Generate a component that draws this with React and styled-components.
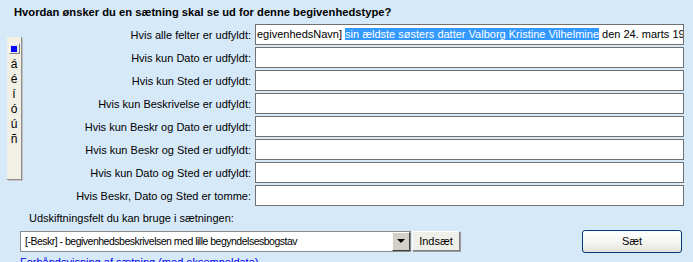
import React from "react";
import styled, { createGlobalStyle } from "styled-components";

const Global = createGlobalStyle`
  html, body {
    margin: 0;
    padding: 0;
    background: #d6e9f9;
  }
  body {
    font-family: "Liberation Sans", Arial, sans-serif;
    font-size: 11px;
    color: #000;
  }
`;

const Page = styled.div`
  width: 693px;
  height: 262px;
  overflow: hidden;
  background: #d6e9f9;
`;

const Title = styled.div`
  font-weight: bold;
  font-size: 11.2px;
  padding: 6px 0 0 14px;
  height: 18px;
  box-sizing: border-box;
`;

const Body = styled.div`
  display: flex;
  padding-left: 7px;
`;

const Toolbar = styled.div`
  margin-top: 19px;
  width: 15px;
  height: 143px;
  background: #f2f0e4;
  border-right: 1px solid #8f8f8f;
  border-bottom: 1px solid #8f8f8f;
  box-shadow: 1px 1px 0 #c0c0c0;
  display: flex;
  flex-direction: column;
  align-items: center;
  padding-top: 6px;
  box-sizing: border-box;
`;

const ToolButton = styled.div`
  width: 9px;
  height: 9px;
  background: #e8e8e8;
  border: 1px solid;
  border-color: #fff #808080 #808080 #fff;
  display: flex;
  align-items: center;
  justify-content: center;
  margin-bottom: 3px;

  &::after {
    content: "";
    width: 6px;
    height: 6px;
    background: #0000ff;
  }
`;

const Letter = styled.div`
  font-size: 12px;
  line-height: 15px;
  height: 15px;
`;

const Form = styled.div`
  display: grid;
  grid-template-columns: 229px 429px;
  column-gap: 4px;
  row-gap: 2px;
  margin-top: 6px;
  align-items: center;
`;

const Label = styled.div`
  text-align: right;
  white-space: nowrap;
`;

const Field = styled.div`
  height: 21px;
  box-sizing: border-box;
  border: 1px solid #707070;
  background: #fff;
  overflow: hidden;
  white-space: nowrap;
  font-size: 11px;
  line-height: 19px;
  padding-left: 1px;
`;

const Selected = styled.span`
  background: #3399ff;
  color: #fff;
`;

const Lower = styled.div`
  padding: 6px 0 0 20px;
`;

const SubLabel = styled.div`
  padding-left: 9px;
  height: 18px;
  line-height: 13px;
`;

const Controls = styled.div`
  display: flex;
  align-items: center;
  height: 22px;
`;

const Select = styled.div`
  width: 391px;
  height: 21px;
  box-sizing: border-box;
  border: 1px solid #8a8a8a;
  background: #fff;
  display: flex;
  align-items: stretch;
`;

const SelectText = styled.div`
  flex: 1;
  padding-left: 4px;
  line-height: 19px;
  font-size: 10.5px;
  letter-spacing: -0.5px;
  white-space: nowrap;
  overflow: hidden;
`;

const Arrow = styled.div`
  width: 18px;
  box-sizing: border-box;
  border: 1px solid;
  border-color: #fff #404040 #404040 #fff;
  background: #d4d0c8;
  display: flex;
  align-items: center;
  justify-content: center;

  &::after {
    content: "";
    border-left: 4px solid transparent;
    border-right: 4px solid transparent;
    border-top: 4px solid #000;
  }
`;

const ClassicButton = styled.button`
  margin-left: 1px;
  width: 48px;
  height: 20px;
  font-family: inherit;
  font-size: 11px;
  background: #f0f0ea;
  border: 1px solid;
  border-color: #fff #808080 #808080 #fff;
  box-shadow: 1px 1px 0 #9a9a9a;
  padding: 0;
  color: #000;
`;

const XPButton = styled.button`
  margin-left: auto;
  margin-right: 11px;
  width: 100px;
  height: 23px;
  font-family: inherit;
  font-size: 11px;
  border: 1px solid #003c74;
  border-radius: 3px;
  background: linear-gradient(#ffffff, #f3f3ee 60%, #e3e2da);
  padding: 0;
  color: #000;
`;

const Preview = styled.div`
  margin-top: 4px;
  color: #0000ee;
  text-decoration: underline;
  font-size: 11px;
`;

const rows = [
  "Hvis alle felter er udfyldt:",
  "Hvis kun Dato er udfyldt:",
  "Hvis kun Sted er udfyldt:",
  "Hvis kun Beskrivelse er udfyldt:",
  "Hvis kun Beskr og Dato er udfyldt:",
  "Hvis kun Beskr og Sted er udfyldt:",
  "Hvis kun Dato og Sted er udfyldt:",
  "Hvis Beskr, Dato og Sted er tomme:",
];

export default function App() {
  return (
    <Page>
      <Global />
      <Title>Hvordan ønsker du en sætning skal se ud for denne begivenhedstype?</Title>
      <Body>
        <Toolbar>
          <ToolButton />
          {["á", "é", "í", "ó", "ú", "ñ"].map((l) => (
            <Letter key={l}>{l}</Letter>
          ))}
        </Toolbar>
        <Form>
          {rows.map((r, i) => (
            <React.Fragment key={r}>
              <Label>{r}</Label>
              <Field>
                {i === 0 && (
                  <>
                    egivenhedsNavn]{" "}
                    <Selected>sin ældste søsters datter Valborg Kristine Vilhelmine</Selected>{" "}
                    den 24. marts 19
                  </>
                )}
              </Field>
            </React.Fragment>
          ))}
        </Form>
      </Body>
      <Lower>
        <SubLabel>Udskiftningsfelt du kan bruge i sætningen:</SubLabel>
        <Controls>
          <Select>
            <SelectText>[-Beskr] - begivenhedsbeskrivelsen med lille begyndelsesbogstav</SelectText>
            <Arrow />
          </Select>
          <ClassicButton>Indsæt</ClassicButton>
          <XPButton>Sæt</XPButton>
        </Controls>
        <Preview>Forhåndsvisning af sætning (med eksempeldata)</Preview>
      </Lower>
    </Page>
  );
}
